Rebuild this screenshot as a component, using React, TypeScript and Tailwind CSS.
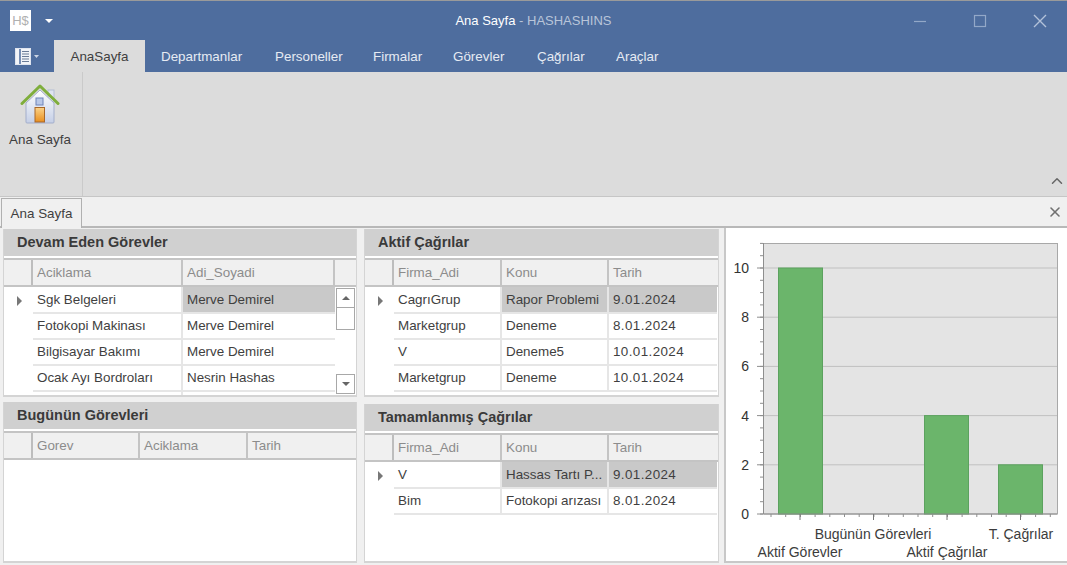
import { X, ChevronUp } from "lucide-react";

const tabs = [
  { name: "Departmanlar", width: "w-[114px]" },
  { name: "Personeller", width: "w-[98px]" },
  { name: "Firmalar", width: "w-[80px]" },
  { name: "Görevler", width: "w-[84px]" },
  { name: "Çağrılar", width: "w-[79px]" },
  { name: "Araçlar", width: "w-[60px]" },
];

type Col = { name: string; width: string };
type GridProps = {
  cols: Col[];
  rows?: string[][];
  highlight?: number;
};

function Arrow() {
  return (
    <svg width="7" height="10" viewBox="0 0 7 10">
      <path d="M1 0l5 5-5 5z" fill="#777" />
    </svg>
  );
}

function Grid({ cols, rows = [], highlight = 1 }: GridProps) {
  return (
    <div className="flex flex-col">
      {/* header */}
      <div className="flex h-[29px] border-t-2 border-b-2 border-[#c4c4c4] bg-[#f0f0f0] text-[#8c8c8c]">
        <div className="w-[29px] shrink-0 border-r-2 border-[#bdbdbd]" />
        {cols.map((c) => (
          <div key={c.name} className={`${c.width} shrink-0 border-r-2 border-[#c4c4c4] pl-[4px] leading-[26px] last:border-r-0`}>
            {c.name}
          </div>
        ))}
      </div>
      {rows.map((row, i) => (
        <div key={i} className={`flex bg-white ${i === 0 ? "h-[27px]" : "h-[26px]"}`}>
          <div className="flex w-[29px] shrink-0 items-center pl-[12px]">{i === 0 && <Arrow />}</div>
          {row.map((cell, j) => (
            <div
              key={j}
              className={`${cols[j].width} shrink-0 truncate border-r-2 border-b-2 border-[#e6e6e6] pl-[4px] last:border-r-0 ${
                i === 0 ? "leading-[26px]" : "leading-[24px]"
              } ${i === 0 && j >= highlight ? "bg-[#c9c9c9]" : "bg-white"} ${j === 2 ? "tracking-[0.4px]" : ""}`}
            >
              {cell}
            </div>
          ))}
        </div>
      ))}
    </div>
  );
}

function PanelTitle({ title }: { title: string }) {
  return (
    <div className="h-[27px] shrink-0 bg-[#d0d0d0] pl-[13px] text-[14.5px] leading-[26px] font-bold text-[#3a3a3a]">{title}</div>
  );
}

function HouseIcon() {
  return (
    <svg width="40" height="40" viewBox="0 0 40 40">
      <defs>
        <linearGradient id="wall" x1="0" y1="0" x2="0" y2="1">
          <stop offset="0" stopColor="#ffffff" />
          <stop offset="1" stopColor="#c5cfe6" />
        </linearGradient>
        <linearGradient id="door" x1="0" y1="0" x2="0" y2="1">
          <stop offset="0" stopColor="#fbd38a" />
          <stop offset="1" stopColor="#e98f1f" />
        </linearGradient>
      </defs>
      <rect x="28" y="6" width="6" height="12" fill="#dfe4f0" stroke="#b4bdd4" />
      <path d="M6 19L20 6l14 13v19a1 1 0 0 1-1 1H7a1 1 0 0 1-1-1z" fill="url(#wall)" stroke="#a3aecb" />
      <path d="M2 19.5L20 2l18 17.5" fill="none" stroke="#7fae3c" strokeWidth="3" strokeLinejoin="round" strokeLinecap="round" />
      <rect x="16" y="14" width="7" height="7" fill="#b9c8e8" stroke="#6f84b8" />
      <rect x="15" y="23.5" width="9.5" height="14.5" fill="url(#door)" stroke="#a8672a" />
    </svg>
  );
}

function MenuIcon() {
  return (
    <svg width="16" height="17" viewBox="0 0 16 17">
      <rect x="0.5" y="0.5" width="15" height="16" fill="#f2f4f8" stroke="#dfe4ee" />
      <path d="M5 1v15" stroke="#4e6d9e" strokeWidth="1.5" />
      <path d="M7 3.5h7M7 6h7M7 8.5h7M7 11h7M7 13.5h7" stroke="#6b7c97" strokeWidth="1" />
    </svg>
  );
}

function Chart() {
  const y = (v: number) => 514 - v * 24.6;
  const bars = [
    { x: 778, v: 10 },
    { x: 924, v: 4 },
    { x: 998, v: 2 },
  ];
  const minorY = Array.from({ length: 23 }, (_, i) => 514 - (i * 24.6) / 2);
  const minorX = Array.from({ length: 20 }, (_, i) => 771 + i * 14.7);
  return (
    <svg width="341" height="333" viewBox="726 229 341 333" className="block">
      <rect x="763.5" y="243.5" width="294" height="270.5" fill="#e4e4e4" stroke="#a8a8a8" />
      {[2, 4, 6, 8, 10].map((v) => (
        <line key={v} x1="763" x2="1057" y1={y(v)} y2={y(v)} stroke="#c0c0c0" strokeWidth="1" />
      ))}
      {bars.map((b) => (
        <rect key={b.x} x={b.x + 0.5} y={y(b.v)} width="44" height={514 - y(b.v)} fill="#6bb56b" stroke="#5ca25f" />
      ))}
      <path d="M763.5 243v271H1057" fill="none" stroke="#8e8e8e" />
      {minorY.map((p) => (
        <line key={p} x1="760" x2="763" y1={p} y2={p} stroke="#8e8e8e" />
      ))}
      {[0, 2, 4, 6, 8, 10].map((v) => (
        <line key={v} x1="757" x2="763" y1={y(v)} y2={y(v)} stroke="#8e8e8e" />
      ))}
      {minorX.map((p) => (
        <line key={p} x1={p} x2={p} y1="514" y2="517" stroke="#8e8e8e" />
      ))}
      {[800, 873.5, 947, 1020.5].map((p) => (
        <line key={p} x1={p} x2={p} y1="514" y2="520" stroke="#777" />
      ))}
      <g fontSize="14" fill="#333" textAnchor="end">
        {[0, 2, 4, 6, 8, 10].map((v) => (
          <text key={v} x="749" y={y(v) + 5}>
            {v}
          </text>
        ))}
      </g>
      <g fontSize="14" fill="#3c3c3c" textAnchor="middle">
        <text x="873" y="539">Bugünün Görevleri</text>
        <text x="1021" y="539">T. Çağrılar</text>
        <text x="800" y="557">Aktif Görevler</text>
        <text x="947" y="557">Aktif Çağrılar</text>
      </g>
    </svg>
  );
}

export default function App() {
  return (
    <div className="flex h-[565px] w-[1067px] flex-col overflow-hidden bg-[#f0f0f0] font-['Liberation_Sans',sans-serif] text-[13.4px] text-[#3f3f3f]">
      {/* Title bar */}
      <div className="relative flex h-[40px] shrink-0 items-center border-t border-[#9a9a9a] bg-[#4e6d9e]">
        <div className="ml-[10px] flex h-[21px] w-[21px] items-center justify-center bg-white text-[13px] leading-none text-[#b0b0b0]">H$</div>
        <svg className="ml-[14px]" width="8" height="4" viewBox="0 0 8 4">
          <path d="M0 0h8L4 4z" fill="#fff" />
        </svg>
        <div className="absolute inset-x-0 text-center text-[13px] text-white">
          Ana Sayfa <span className="text-[#b9c5d9]">- HASHASHINS</span>
        </div>
        <div className="absolute right-[20px] flex items-center gap-[46px]">
          <svg width="14" height="14" viewBox="0 0 14 14">
            <path d="M1 7.5h12" stroke="#93a8c8" strokeWidth="1.2" />
          </svg>
          <svg width="14" height="14" viewBox="0 0 14 14">
            <rect x="1.5" y="1.5" width="11" height="11" fill="none" stroke="#93a8c8" strokeWidth="1.2" />
          </svg>
          <svg width="14" height="14" viewBox="0 0 14 14">
            <path d="M1 1l12 12M13 1L1 13" stroke="#b3c2d9" strokeWidth="1.4" />
          </svg>
        </div>
      </div>

      {/* Ribbon tabs */}
      <div className="flex h-[32px] shrink-0 items-center bg-[#4e6d9e]">
        <div className="flex w-[54px] items-center pl-[15px]">
          <MenuIcon />
          <svg className="ml-[3px]" width="5" height="3" viewBox="0 0 5 3">
            <path d="M0 0h5L2.5 3z" fill="#cdd6e5" />
          </svg>
        </div>
        <div className="flex h-full w-[91px] items-center justify-center bg-[#dcdcdc] pt-[2px] text-[#3f3f3f]">AnaSayfa</div>
        <div className="flex pt-[2px] pl-[16px] text-[#e6ebf3]">
          {tabs.map((t) => (
            <span key={t.name} className={t.width}>
              {t.name}
            </span>
          ))}
        </div>
      </div>

      {/* Ribbon body */}
      <div className="relative flex h-[124px] shrink-0 bg-[#dcdcdc]">
        <div className="flex w-[83px] flex-col items-center border-r border-[#cacaca] pt-[12px] pr-[2px]">
          <HouseIcon />
          <span className="mt-[6px]">Ana Sayfa</span>
        </div>
        <ChevronUp size={18} className="absolute right-px bottom-[6px] text-[#666]" />
      </div>

      {/* Document tab strip */}
      <div className="relative flex h-[32px] shrink-0 items-end border-t border-[#c6c6c6] border-b-2 border-b-[#b8b8b8] pl-px">
        <div className="mb-[-2px] flex h-[30px] w-[81px] items-center justify-center border-x border-t border-[#b0b0b0] bg-[#f0f0f0] pt-[2px]">Ana Sayfa</div>
        <X size={16} strokeWidth={2.4} className="absolute right-[4px] top-[7px] text-[#707070]" />
      </div>

      {/* Content */}
      <div className="flex min-h-0 flex-1 pb-[2px] pl-[3px]">
        <div className="flex w-[354px] shrink-0 flex-col pt-px">
          <div className="relative h-[168px] shrink-0 overflow-hidden border-x border-b-2 border-[#d4d4d4] bg-white">
            <PanelTitle title="Devam Eden Görevler" />
            <div className="pt-[2px]">
              <Grid
                cols={[
                  { name: "Aciklama", width: "w-[150px]" },
                  { name: "Adi_Soyadi", width: "w-[152px]" },
                  { name: "", width: "w-[21px]" },
                ]}
                rows={[
                  ["Sgk Belgeleri", "Merve Demirel"],
                  ["Fotokopi Makinası", "Merve Demirel"],
                  ["Bilgisayar Bakımı", "Merve Demirel"],
                  ["Ocak Ayı Bordroları", "Nesrin Hashas"],
                  ["", ""],
                ]}
              />
            </div>
            {/* scrollbar */}
            <div className="absolute top-[59px] left-[332px] flex h-[106px] w-[19px] flex-col">
              <div className="flex h-[20px] items-center justify-center border border-[#a8a8a8] bg-white">
                <svg width="8" height="4" viewBox="0 0 8 4"><path d="M4 0l4 4H0z" fill="#666" /></svg>
              </div>
              <div className="h-[22px] border border-t-0 border-[#a8a8a8] bg-white" />
              <div className="mt-auto flex h-[20px] items-center justify-center border border-[#a8a8a8] bg-white">
                <svg width="8" height="4" viewBox="0 0 8 4"><path d="M0 0h8L4 4z" fill="#666" /></svg>
              </div>
            </div>
          </div>
          <div className="mt-[5px] min-h-0 flex-1 border-x border-b-2 border-[#d4d4d4] bg-white">
            <PanelTitle title="Bugünün Görevleri" />
            <div className="pt-[2px]">
              <Grid
                cols={[
                  { name: "Gorev", width: "w-[107px]" },
                  { name: "Aciklama", width: "w-[108px]" },
                  { name: "Tarih", width: "w-[108px]" },
                ]}
              />
            </div>
          </div>
        </div>

        <div className="ml-[7px] flex w-[355px] shrink-0 flex-col pt-px">
          <div className="h-[168px] shrink-0 overflow-hidden border-x border-b-2 border-[#d4d4d4] bg-white">
            <PanelTitle title="Aktif Çağrılar" />
            <div className="pt-[2px]">
              <Grid
                cols={[
                  { name: "Firma_Adi", width: "w-[108px]" },
                  { name: "Konu", width: "w-[107px]" },
                  { name: "Tarih", width: "w-[108px]" },
                ]}
                rows={[
                  ["CagrıGrup", "Rapor Problemi", "9.01.2024"],
                  ["Marketgrup", "Deneme", "8.01.2024"],
                  ["V", "Deneme5", "10.01.2024"],
                  ["Marketgrup", "Deneme", "10.01.2024"],
                ]}
              />
            </div>
          </div>
          <div className="mt-[7px] min-h-0 flex-1 border-x border-b-2 border-[#d4d4d4] bg-white">
            <PanelTitle title="Tamamlanmış Çağrılar" />
            <div className="pt-[2px]">
              <Grid
                cols={[
                  { name: "Firma_Adi", width: "w-[108px]" },
                  { name: "Konu", width: "w-[107px]" },
                  { name: "Tarih", width: "w-[108px]" },
                ]}
                rows={[
                  ["V", "Hassas Tartı P...", "9.01.2024"],
                  ["Bim", "Fotokopi arızası", "8.01.2024"],
                ]}
              />
            </div>
          </div>
        </div>

        <div className="ml-[5px] min-w-0 flex-1 border-l-2 border-b-2 border-[#c8c8c8] bg-white pt-px">
          <Chart />
        </div>
      </div>
    </div>
  );
}
